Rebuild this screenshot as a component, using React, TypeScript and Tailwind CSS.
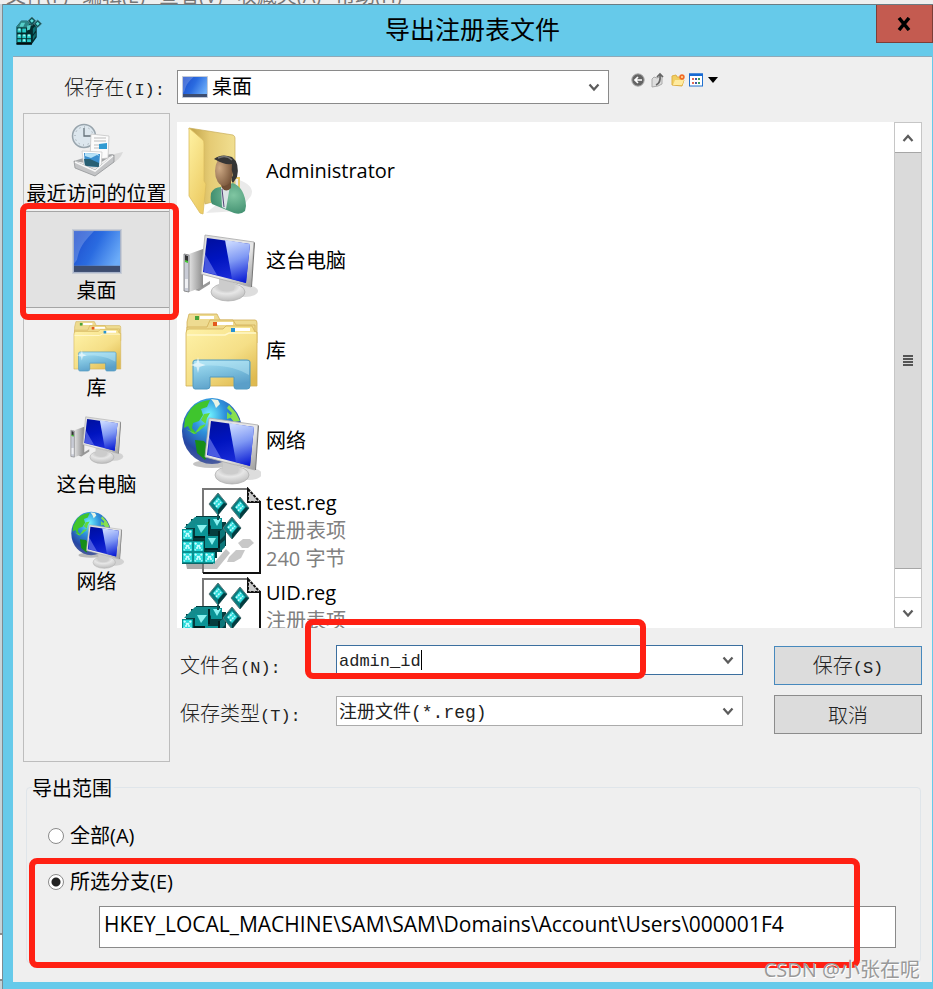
import { useState, type ReactNode } from "react";

const SANS = "font-['Open_Sans','Noto_Sans_CJK_SC',sans-serif]";
const MONO = "font-['Liberation_Mono','Noto_Sans_CJK_SC',monospace]";

type IconProps = { className?: string; viewBox?: string };

function Chevron({ up = false }: { up?: boolean }) {
  return (
    <svg viewBox="0 0 12 10" className="h-2.5 w-3 shrink-0" fill="none" stroke="#5c5c5c" strokeWidth="2.2" aria-hidden="true">
      <path d={up ? "M1.5 8 6 3l4.500 5" : "M1.500 2.500 6 7.500l4.500-5"} />
    </svg>
  );
}

function DesktopIcon({ className }: IconProps) {
  return (
    <svg viewBox="0 0 50 44" preserveAspectRatio="none" className={className} aria-hidden="true">
      <defs>
        <linearGradient id="desk" x1="0" y1="0.3" x2="1" y2="0.7">
          <stop offset="0" stopColor="#1f50cf" />
          <stop offset="0.45" stopColor="#2a6be0" />
          <stop offset="1" stopColor="#6cacf8" />
        </linearGradient>
      </defs>
      <rect x="0.500" y="0.500" width="49" height="43" fill="#a9b4c9" stroke="#c8cdd6" />
      <rect x="2" y="2" width="46" height="34" fill="url(#desk)" />
      <path d="M2 2h20C15 10 8 15 5 30L2 34z" fill="#fff" opacity="0.200" />
      <rect x="2" y="36" width="46" height="6" fill="#3d4d70" />
    </svg>
  );
}

function Cell({ x, y }: { x: number; y: number }) {
  return (
    <g>
      <rect x={x} y={y} width="11" height="11.500" fill="#0a8f8f" />
      <rect x={x + 1} y={y + 1} width="9" height="9" fill="#29dada" />
      <path d={`M${x + 2} ${y + 2}l7 7M${x + 9} ${y + 2}l-7 7`} stroke="#c8ffff" strokeWidth="2" strokeDasharray="2 1" />
    </g>
  );
}

function Diamond({ x, y }: { x: number; y: number }) {
  return (
    <g transform={`translate(${x} ${y})`}>
      <path d="M0-11 9 0 0 11-9 0z" fill="#087d80" stroke="#5c7778" strokeWidth="1" />
      <path d="M0-7 5-1 0 5-5-1z" fill="#30dada" />
      <path d="M-4 0 1-5M-2 3l5-5" stroke="#c8ffff" strokeWidth="1.500" strokeDasharray="2 1" />
      <path d="M0 11 9 0 6-1 0 6z" fill="#023c40" />
    </g>
  );
}

function Cubes() {
  return (
    <g>
      <path d="M1 42h4v-5h5v-5h5v-3h24v6h6v24h-4v6h-5v6h-4v6H1z" fill="#053c3e" />
      <path d="M3 41l11-11h23l-6 8-9 3z" fill="#138b8d" />
      <Cell x={1} y={42} />
      <Cell x={1} y={54} />
      <Cell x={12} y={54} />
      <Cell x={1} y={65} />
      <Cell x={12} y={65} />
      <Cell x={23} y={65} />
      <path d="M14 37h13v12H14zM30 31h11v11H30zM24 49h13v12H24z" fill="#0b9496" />
      <path d="M16 38h10l-6 8zM32 32h8l-4 7zM27 51h8l-4 7z" fill="#8cf1ef" />
      <path d="M39 44l5-4v8l-5 5zM39 57l5-4v7l-5 5z" fill="#0c7679" />
      <path d="M28 32v15M38 44v17M13 50h11M24 62h13" stroke="#011f20" strokeWidth="2" />
      <path d="M37 17v16M43 42l7-3" stroke="#164e50" strokeWidth="2" />
      <Diamond x={37} y={17} />
      <Diamond x={59} y={21} />
      <Diamond x={51} y={41} />
    </g>
  );
}

function RegFileIcon({ className }: IconProps) {
  return (
    <svg viewBox="0 0 80 88" className={className} aria-hidden="true">
      <path d="M5 77h27l14-15v17l-9 6H21v-3H6z" fill="#aaa" />
      <path d="M22 2h45l12 12v72H22z" fill="#fff" />
      <path d="M22 86V2h45" fill="none" stroke="#777" strokeWidth="2" />
      <path d="M67 2v13h12v71H22" fill="none" stroke="#111" strokeWidth="2" />
      <path d="M67 2l12 13H67z" fill="#ccc" stroke="#111" strokeWidth="2" strokeDasharray="3 1" />
      <path d="M23 77h9l13-15 4 4-13 16H23z" fill="#c4c4c4" />
      <path d="M48 70l7-7h9l-4 8-7 4h-7zM57 56l5-4h7l4 4-6 5h-6z" fill="#c8c8c8" />
      <Cubes />
    </svg>
  );
}

function RegeditIcon({ className }: IconProps) {
  return (
    <svg viewBox="0 0 28 29" className={className} aria-hidden="true">
      <path d="M1 10l5-6h6l3 3 3-1 4 3v12l-5 7H1z" fill="#032a2c" />
      <path d="M1 10l5-6h6l3 3-3 4H1z" fill="#2c8587" />
      <path d="M2 12h4v4H2zM7 12h4v4H7zM2 18h4v4H2zM7 18h4v4H7zM12 18h4v4h-4zM2 23h4v3H2zM7 23h4v3H7zM12 23h4v3h-4z" fill="#27c9c6" />
      <path d="M3 12h2v2H3zM8 18h2v2H8zM3 18h2v2H3zM13 18h2v2h-2zM8 23h2v2H8z" fill="#a5f6f2" />
      <path d="M6 6h4l-2 4H4zM12 9l4-1-1 5-3 1z" fill="#58cfca" />
      <path d="M18 12l3-3v5l-3 4zM18 20l3-4v4l-3 4z" fill="#0d6d70" />
      <path d="M17 0l4 4-4 5-4-5zM23 3l4 4-4 4-4-4z" fill="#0a5356" stroke="#54777c" strokeWidth="0.700" />
      <path d="M17 2l2 2-2 2-2-2zM23 5l2 2-2 2-2-2z" fill="#5fdcda" />
      <path d="M1 28h16" stroke="#000" strokeWidth="1.500" />
    </svg>
  );
}

function Monitor() {
  return (
    <g>
      <defs>
        <linearGradient id="screen" x1="0" y1="0" x2="0.3" y2="1">
          <stop offset="0" stopColor="#000f9c" />
          <stop offset="0.5" stopColor="#0014c0" />
          <stop offset="1" stopColor="#1b2cd8" />
        </linearGradient>
        <linearGradient id="glare" x1="0.4" y1="0" x2="0.6" y2="1">
          <stop offset="0" stopColor="#c9d8ff" />
          <stop offset="0.45" stopColor="#7f98f4" />
          <stop offset="1" stopColor="#0a1cd4" />
        </linearGradient>
        <linearGradient id="frame" x1="0" y1="0" x2="1" y2="1">
          <stop offset="0" stopColor="#dcdcdc" />
          <stop offset="0.6" stopColor="#e8e8e8" />
          <stop offset="1" stopColor="#9a9a9a" />
        </linearGradient>
        <radialGradient id="stand" cx="0.45" cy="0.2" r="0.8">
          <stop offset="0" stopColor="#a8a8a8" />
          <stop offset="0.5" stopColor="#e6e6e6" />
          <stop offset="1" stopColor="#bcbcbc" />
        </radialGradient>
      </defs>
      <ellipse cx="64" cy="74" rx="13" ry="6" fill="#777" opacity="0.250" />
      <ellipse cx="47" cy="75" rx="17" ry="9" fill="url(#stand)" stroke="#aaa" strokeWidth="0.700" />
      <path d="M38 61l15 5v7q-8 3-15-1z" fill="#ccc" />
      <path d="M24 18l49 7-3 45-50-13z" fill="url(#frame)" stroke="#aaa" strokeWidth="0.800" />
      <path d="M73 25l1 1-3 44-1 0z" fill="#777" />
      <path d="M26 21l43 6-4 39-43-11z" fill="url(#screen)" />
      <path d="M44 23l25 4-4 39-14-4z" fill="url(#glare)" />
      <path d="M24 37l12 21-13-3z" fill="#98a7ff" opacity="0.450" />
    </g>
  );
}

function ComputerIcon({ className, viewBox = "0 0 80 88" }: IconProps) {
  return (
    <svg viewBox={viewBox} className={className} aria-hidden="true">
      <defs>
        <linearGradient id="tower">
          <stop offset="0" stopColor="#e2e2e2" />
          <stop offset="1" stopColor="#8c8c8c" />
        </linearGradient>
      </defs>
      <path d="M14 73l15-9v3l-11 7z" fill="#999" />
      <path d="M8 37l14-5v38L8 75z" fill="url(#tower)" />
      <path d="M3 37l5 1v37l-5-1z" fill="#c9ccd6" stroke="#777" strokeWidth="0.800" />
      <path d="M4 38l3 1v6l-3-1z" fill="#333" />
      <path d="M4 43l3 1v2l-3-1z" fill="#44c832" />
      <path d="M4 62h3v9H4z" fill="#fff" opacity="0.700" />
      <Monitor />
    </svg>
  );
}

function NetworkIcon({ className, viewBox = "0 0 80 88" }: IconProps) {
  return (
    <svg viewBox={viewBox} className={className} aria-hidden="true">
      <defs>
        <radialGradient id="ocean" cx="0.45" cy="0.26" r="0.75">
          <stop offset="0" stopColor="#71f4ff" />
          <stop offset="0.35" stopColor="#2f93dc" />
          <stop offset="0.75" stopColor="#2546a4" />
          <stop offset="1" stopColor="#4c5d9d" />
        </radialGradient>
      </defs>
      <ellipse cx="31" cy="67" rx="19" ry="4" fill="#555" opacity="0.350" />
      <ellipse cx="31" cy="34" rx="30" ry="33" fill="url(#ocean)" />
      <path d="M8 15C12 7 20 4 29 3l-3 7-6 2 2 6-4 6-6 2-1 5 5 6-5-1-4-7-4 2 1-9z" fill="#3fc52d" />
      <path d="M5 32l9 4 5-7 6-2-5-4 3-6 6-1-3 5-2 8-6 5-5 3z" fill="#62d93d" />
      <path d="M30 2l7 1 2 4-4 4-2-5z" fill="#e8f4e5" />
      <path d="M48 8l7 8 4 8-6 1-4-5 2-4-5-5z" fill="#8ae04e" />
      <path d="M14 43l9 1 7 9-6 10-8-7z" fill="#178e18" />
      <path d="M46 15l6 5-6 2z" fill="#75d952" />
      <g transform="translate(4 3)">
        <Monitor />
      </g>
    </svg>
  );
}

function LibraryIcon({ className, viewBox = "0 0 80 88" }: IconProps) {
  return (
    <svg viewBox={viewBox} className={className} aria-hidden="true">
      <defs>
        <linearGradient id="manila" x1="0" y1="0" x2="0.8" y2="1">
          <stop offset="0" stopColor="#fff3a9" />
          <stop offset="0.6" stopColor="#f5df87" />
          <stop offset="1" stopColor="#dfba50" />
        </linearGradient>
        <linearGradient id="stand-blue" x1="0" y1="0" x2="0.4" y2="1">
          <stop offset="0" stopColor="#a9e2f6" />
          <stop offset="0.5" stopColor="#80c3e0" />
          <stop offset="1" stopColor="#5a9fc9" />
        </linearGradient>
      </defs>
      <g stroke="#d0ae55" strokeWidth="0.800">
        <path d="M6 15l2-8h28l3 6h35q2 0 2 3v20H6z" fill="#eedb91" />
        <path d="M6 20h20l3-7h23l3 5h19v20H6z" fill="#eed98c" />
        <path d="M5 26q0-4 3-4h34l3-3h26l3 6h2v54H5z" fill="url(#manila)" />
      </g>
      <path d="M6 28h38l4-2h27" fill="none" stroke="#fff7c9" strokeWidth="1.500" />
      <path d="M19 9h14v3H19zM36 15h16v3H36zM53 21h16v3H53z" fill="#fff" />
      <path d="M14 9h4v4h-4z" fill="#49a339" />
      <path d="M32 15h4v4h-4z" fill="#e35a1c" />
      <path d="M50 21h4v4h-4z" fill="#2792d2" />
      <path d="M12 55q0-2 3-2h51q3 0 3 2v24q0 3-3 3H55q-2 0-2-3V70H29v9q0 3-3 3H14q-2 0-2-3z" fill="url(#stand-blue)" stroke="#529ac0" strokeWidth="1" />
      <path d="M13 60c22-4 42 0 55 8V54H14z" fill="#c9f1fb" opacity="0.400" />
      <path d="M17 50l1.500 6 6 2-6 2-1.500 6-1.500-6-6-2 6-2z" fill="#fff" opacity="0.600" />
    </svg>
  );
}

function UserFolderIcon({ className }: IconProps) {
  return (
    <svg viewBox="0 0 80 88" className={className} aria-hidden="true">
      <defs>
        <linearGradient id="folder-back">
          <stop offset="0" stopColor="#bfa146" />
          <stop offset="0.45" stopColor="#e5cb74" />
          <stop offset="1" stopColor="#f1df91" />
        </linearGradient>
        <linearGradient id="folder-flap" x1="0" y1="0" x2="0.5" y2="1">
          <stop offset="0" stopColor="#fff2a3" />
          <stop offset="1" stopColor="#edcd66" />
        </linearGradient>
        <radialGradient id="skin" cx="0.25" cy="0.4" r="0.8">
          <stop offset="0" stopColor="#ceaa85" />
          <stop offset="1" stopColor="#735035" />
        </radialGradient>
        <radialGradient id="shirt" cx="0.65" cy="0.4" r="0.7">
          <stop offset="0" stopColor="#80c6a2" />
          <stop offset="1" stopColor="#3c8b6c" />
        </radialGradient>
      </defs>
      <path d="M25 86l10-8 20-26q20 6 15 17L58 84z" fill="#888" opacity="0.180" />
      <path d="M8 1l44 7q2 1 2 3v58l-30 8z" fill="url(#folder-back)" stroke="#c9ad59" strokeWidth="0.700" />
      <path d="M54 51h4v12h-4" fill="none" stroke="#ebcb69" strokeWidth="2" />
      <path d="M8 1l14 12q1 1 1 4v37l2 3-3 30-3-1L8 69z" fill="url(#folder-flap)" stroke="#dbbd60" strokeWidth="0.800" />
      <path d="M30 66q3-6 10-6l12-4q12 5 13 23l-1 5q-4 4-11 2l-22-9q-2-3-1-11z" fill="url(#shirt)" />
      <path d="M40 60l8 1 1-2-4 23-4-2z" fill="#dbe5e5" />
      <path d="M41 62l2 18" stroke="#547" strokeWidth="1" />
      <path d="M38 51h12v10q-5 5-9 0z" fill="#704e35" />
      <ellipse cx="43" cy="44" rx="9" ry="15" fill="url(#skin)" />
      <path d="M33 32q7-6 18-2 8 6 5 20l-4 6q-3-3 0-8-2-5-1-11-8 1-16-4z" fill="#353535" />
      <path d="M37 31q8-4 14 2" stroke="#777" fill="none" strokeWidth="1.500" />
    </svg>
  );
}

function RecentIcon({ className }: IconProps) {
  return (
    <svg viewBox="0 0 54 58" className={className} aria-hidden="true">
      <circle cx="14" cy="13" r="11.500" fill="#dde7ee" stroke="#98a4ac" strokeWidth="1.500" />
      <circle cx="14" cy="13" r="9" fill="none" stroke="#7b858c" strokeWidth="1" strokeDasharray="0.800 3.900" />
      <path d="M14 5v8h8" fill="none" stroke="#66727a" strokeWidth="1.300" />
      <path d="M40 32l13-3q-3 8-12 12z" fill="#999" opacity="0.250" />
      <path d="M4 38l16-5 24-2-17 11z" fill="#a3a5a7" />
      <path d="M21 11l18 2-1 22-18 2z" fill="#fbfbfb" stroke="#c5c5c5" strokeWidth="0.800" />
      <path d="M24 15h12M24 18h12M24 22h5M24 25h5" stroke="#bbb" strokeWidth="1" />
      <path d="M29 21l8-1v6h-8z" fill="#329bd2" />
      <path d="M12 28l20 1-1 16-17-1z" fill="#fff" stroke="#ccc" strokeWidth="0.800" />
      <path d="M14 30l16 1-1 13-14-1z" fill="#3a8fce" />
      <path d="M14 36l6 0 9 4v4l-14-1z" fill="#285f73" />
      <path d="M15 33l6 2 6-3 2 1-1-2-13-1z" fill="#b5e1f7" />
      <path d="M4 38l21 9 19-15v7L25 53 5 45z" fill="#c3c4c6" stroke="#929497" strokeWidth="0.800" />
      <path d="M5 39l20 9 18-15" fill="none" stroke="#f7f7f7" strokeWidth="1.500" />
    </svg>
  );
}

function ToolbarIcons() {
  return (
    <div className="flex w-[313px] shrink-0 gap-1 pt-0.5 pl-[21px]">
      <button type="button" aria-label="后退" className="size-4">
        <svg viewBox="0 0 16 16">
          <circle cx="8" cy="8" r="6.200" fill="#646464" stroke="#aaa" />
          <path d="M12 8H5M8 5 5 8l3 3" stroke="#fff" strokeWidth="1.700" fill="none" />
        </svg>
      </button>
      <button type="button" aria-label="向上一级" className="size-4">
        <svg viewBox="0 0 16 16">
          <path d="M2 7l2-2 3 1 5-2v8l-4 2-6 1z" fill="#ddd" stroke="#aaa" />
          <path d="M6 13q5-2 4-10M7 5l3-3 3 3" stroke="#666" strokeWidth="1.700" fill="none" />
        </svg>
      </button>
      <button type="button" aria-label="新建文件夹" className="size-4">
        <svg viewBox="0 0 16 16">
          <path d="M2 13V4l4-1 1 2h5v3h2l-2 6z" fill="#f1cf62" stroke="#deb045" />
          <path d="M3 13l2-5h9l-2 5z" fill="#ffeba0" />
          <circle cx="12" cy="5" r="2.700" fill="#f26b27" />
          <circle cx="12" cy="5" r="1" fill="#ffe6a0" />
        </svg>
      </button>
      <button type="button" aria-label="查看菜单" className="-ml-0.5 flex h-4 w-8 items-center gap-1">
        <svg viewBox="0 0 16 16" className="size-4 shrink-0">
          <rect x="1.500" y="2" width="13" height="12" fill="#fff" stroke="#1f70cf" />
          <path d="M1 1.500h14V4H1z" fill="#1769d2" />
          <path d="M4 7h2M4 11h2" stroke="#e26956" strokeWidth="2" />
          <path d="M7 7h2M7 11h2" stroke="#3f59a4" strokeWidth="2" />
          <path d="M10 7h2M10 11h2" stroke="#3d9b57" strokeWidth="2" />
        </svg>
        <svg viewBox="0 0 10 6" className="h-1.5 w-2.5 shrink-0">
          <path d="M0 0h10L5 6z" />
        </svg>
      </button>
    </div>
  );
}

// SimSun-like label: full-width hanzi with narrower latin
function Mixed({ text, latin }: { text: string; latin?: string }) {
  return (
    <span className="block pt-1.5 text-xl leading-6 font-light whitespace-nowrap text-[#222]">
      {text}
      {latin && <span className="text-[17px]">{latin}</span>}
    </span>
  );
}

function RedBox({ className }: { className: string }) {
  return <div className={`pointer-events-none absolute z-10 rounded-lg border-[6px] border-[#ff2013] ${className}`} />;
}

function Place({ label, active = false, children }: { label: string; active?: boolean; children: ReactNode }) {
  return (
    <div className="relative">
      <button
        type="button"
        className={`flex h-[97px] w-full flex-col items-center border-y pt-2 text-xl leading-[26px] whitespace-nowrap ${
          active ? "border-[#a5a5a5] bg-[#e2e2e2]" : "border-transparent"
        }`}
      >
        {children}
        {label}
      </button>
      {active && <RedBox className="-top-2 -right-2.5 -bottom-3 -left-1" />}
    </div>
  );
}

function FileItem({ icon, name, details = [] }: { icon: ReactNode; name: string; details?: string[] }) {
  return (
    <li className="flex h-[90px] shrink-0 items-center gap-[5px] pl-1 text-xl leading-7">
      {icon}
      <div className={details.length ? "min-h-[84px]" : ""}>
        <p>{name}</p>
        {details.map((d) => (
          <p key={d} className="text-[#808080]">{d}</p>
        ))}
      </div>
    </li>
  );
}

const menus = ["文件(F)", "编辑(E)", "查看(V)", "收藏夹(A)", "帮助(H)"];

export default function App() {
  const [scope, setScope] = useState("branch");
  const [fileName, setFileName] = useState("admin_id");
  const big = "h-[88px] w-20 shrink-0";
  const small = "h-[58px] w-[54px] shrink-0";
  const radio =
    "size-4 appearance-none rounded-full border border-[#8a8a8a] bg-white checked:bg-[radial-gradient(circle,#222_4px,#fff_5px)]";

  return (
    <div className={`flex h-screen flex-col overflow-hidden bg-[#efefef] text-black ${SANS}`}>
      <div className="flex h-1 shrink-0 items-end gap-3.5 overflow-hidden pl-1.5 text-xl leading-4 text-[#777]">
        {menus.map((m) => (
          <span key={m}>{m}</span>
        ))}
      </div>

      <div className="flex min-h-0 flex-1">
        <div className="flex w-[3px] flex-col justify-end border-r border-[#7d8c92] bg-[#c5d3d9] pb-2">
          <div className="h-12 border-y-2 border-[#8d8d8d] bg-white" />
        </div>

        <main className="flex min-w-0 flex-1 flex-col border-t border-[#6b7c83] bg-[#66caea] pr-px pb-[7px] pl-2.5">
          <header className="flex h-[51px] shrink-0 justify-between">
            <RegeditIcon className="mt-3 ml-0.5 h-7 w-7" />
            <h1 className="pt-2 pl-[26px] text-[25px] leading-8">导出注册表文件</h1>
            <button
              type="button"
              aria-label="关闭"
              className="-mr-px flex h-[38px] w-[57px] items-center justify-center border border-t-0 border-[#7c3e38] bg-[#c45b50]"
            >
              <svg viewBox="0 0 14 14" className="size-3.5" stroke="#000" strokeWidth="3.500">
                <path d="M2 1l10 12M12 1 2 13" />
              </svg>
            </button>
          </header>

          <div className="flex min-h-0 flex-1 flex-col border-t border-[#8fa9b8] bg-[#efefef] px-2.5 pt-[13px] pb-[19px]">
            <div className="flex h-[34px] shrink-0">
              <label htmlFor="look-in" className={`flex w-[154px] items-center justify-end pr-3 ${MONO}`}>
                <Mixed text="保存在" latin="(I):" />
              </label>
              <div className="flex min-w-0 flex-1 items-center gap-1 border border-[#8a8a8a] bg-white pr-2 pl-1">
                <DesktopIcon className="h-[22px] w-[26px] shrink-0" />
                <select id="look-in" className={`min-w-0 flex-1 appearance-none bg-transparent pt-1 text-xl leading-6 outline-none ${MONO}`}>
                  <option>桌面</option>
                </select>
                <Chevron />
              </div>
              <ToolbarIcons />
            </div>

            <div className="mt-[9px] flex min-h-0 flex-1 gap-[7px]">
              <nav className="w-[147px] shrink-0 border border-[#bdbdbd] bg-[#f0f0f0]">
                <Place label="最近访问的位置">
                  <RecentIcon className={small} />
                </Place>
                <Place label="桌面" active>
                  <span className="flex h-[58px] items-center pt-1">
                    <DesktopIcon className="h-[45px] w-[50px]" />
                  </span>
                </Place>
                <Place label="库">
                  <LibraryIcon className={small} />
                </Place>
                <Place label="这台电脑">
                  <ComputerIcon className={small} viewBox="2 14 76 82" />
                </Place>
                <Place label="网络">
                  <NetworkIcon className={small} viewBox="0 0 80 88" />
                </Place>
              </nav>

              <div className="flex min-w-0 flex-1 flex-col pt-[9px] pb-7">
                <div className="flex min-h-0 flex-1 bg-white">
                  <ul className="flex min-w-0 flex-1 flex-col overflow-hidden pt-1">
                    <FileItem name="Administrator" icon={<UserFolderIcon className={big} />} />
                    <FileItem name="这台电脑" icon={<ComputerIcon className={big} />} />
                    <FileItem name="库" icon={<LibraryIcon className={big} />} />
                    <FileItem name="网络" icon={<NetworkIcon className={big} />} />
                    <FileItem name="test.reg" details={["注册表项", "240 字节"]} icon={<RegFileIcon className={big} />} />
                    <FileItem name="UID.reg" details={["注册表项"]} icon={<RegFileIcon className={big} />} />
                  </ul>
                  <div className="flex w-7 shrink-0 flex-col border border-[#c6c6c6] bg-white">
                    <button type="button" aria-label="向上滚动" className="flex h-[29px] shrink-0 items-center justify-center">
                      <Chevron up />
                    </button>
                    <div className="flex flex-1 flex-col items-center justify-center gap-px border-y border-[#a6a6a6] bg-[#dadada]">
                      <div className="h-0.5 w-2.5 bg-[#555]" />
                      <div className="h-0.5 w-2.5 bg-[#555]" />
                      <div className="h-0.5 w-2.5 bg-[#555]" />
                      <div className="h-0.5 w-2.5 bg-[#555]" />
                    </div>
                    <button
                      type="button"
                      aria-label="向下滚动"
                      className="mt-7 flex h-[30px] shrink-0 items-center justify-center border-t border-[#c6c6c6]"
                    >
                      <Chevron />
                    </button>
                  </div>
                </div>

                <div className={`mt-[17px] flex gap-[31px] ${MONO}`}>
                  <div className="grid min-w-0 flex-1 auto-rows-[30px] grid-cols-[156px_minmax(0,1fr)] items-center gap-x-[3px] gap-y-[21px]">
                    <label htmlFor="file-name" className="pt-2.5 pl-[3px]">
                      <Mixed text="文件名" latin="(N):" />
                    </label>
                    <div className="relative h-[30px]">
                      <label className="flex h-full items-center border border-[#3b6f9f] bg-white pr-2 pl-0.5">
                        <input
                          id="file-name"
                          value={fileName}
                          onChange={(e) => setFileName(e.target.value)}
                          className="pt-1 text-[17px] leading-6 text-[#222] outline-none [field-sizing:content]"
                        />
                        <span className="mr-auto h-5 w-px bg-black" />
                        <Chevron />
                      </label>
                      <RedBox className="-top-[26px] right-[97px] -bottom-1 -left-[31px]" />
                    </div>
                    <label htmlFor="file-type" className="pt-1 pl-[3px]">
                      <Mixed text="保存类型" latin="(T):" />
                    </label>
                    <div className="flex h-[30px] items-center border border-[#ababab] bg-white pr-2 pl-0.5">
                      <select id="file-type" className="min-w-0 flex-1 appearance-none bg-transparent pt-1 text-lg leading-6 text-[#222] outline-none">
                        <option>注册文件(*.reg)</option>
                      </select>
                      <Chevron />
                    </div>
                  </div>
                  <div className="flex w-[148px] shrink-0 flex-col gap-2.5 pt-px">
                    <button type="button" className="h-[39px] border border-[#4789bd] bg-[#dcdcdc]">
                      <Mixed text="保存" latin="(S)" />
                    </button>
                    <button type="button" className="h-[39px] border border-[#8c8c8c] bg-[#dcdcdc]">
                      <Mixed text="取消" />
                    </button>
                  </div>
                </div>
              </div>
            </div>

            <fieldset className="relative mt-[11px] mr-px ml-[3px] shrink-0 rounded-sm border border-[#dfe5ea] pr-6 pb-3.5 pl-[21px] text-xl leading-6">
              <legend className="-ml-4 pt-1 pr-0.5">导出范围</legend>
              <label className="mt-[21px] flex h-7 items-center gap-1.5">
                <input type="radio" name="scope" checked={scope === "all"} onChange={() => setScope("all")} className={radio} />
                全部(A)
              </label>
              <label className="mt-[18px] flex h-7 items-center gap-1.5">
                <input type="radio" name="scope" checked={scope === "branch"} onChange={() => setScope("branch")} className={radio} />
                所选分支(E)
              </label>
              <div className="mt-2.5 pl-[51px]">
                <input
                  aria-label="所选分支"
                  defaultValue="HKEY_LOCAL_MACHINE\SAM\SAM\Domains\Account\Users\000001F4"
                  className="block h-[42px] w-full border border-[#8a8a8a] bg-white px-1 pb-1.5 text-[21px] outline-none"
                />
              </div>
              <RedBox className="top-[57px] right-[60px] -bottom-1.5 left-0.5" />
              <p className="absolute right-0 -bottom-5 z-20 text-xl leading-6 text-[#999] [text-shadow:1px_1px_0_#fff]">
                CSDN @小张在呢
              </p>
            </fieldset>
          </div>
        </main>
      </div>
    </div>
  );
}
